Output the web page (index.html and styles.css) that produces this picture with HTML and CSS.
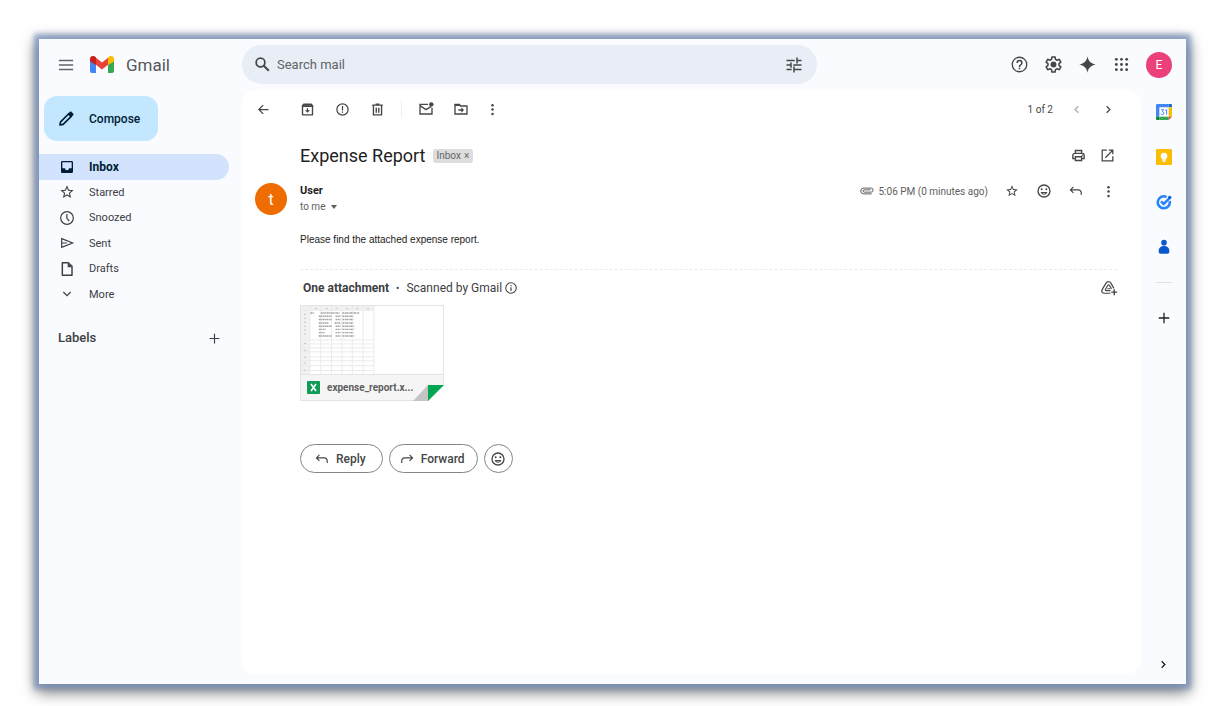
FILE: index.html
```html
<!DOCTYPE html>
<html lang="en">
<head>
<meta charset="utf-8">
<title>Expense Report - Gmail</title>
<link rel="stylesheet" href="styles.css">
</head>
<body>
<svg class="defs" aria-hidden="true">
  <symbol id="star" viewBox="0 0 24 24"><path d="M22 9.24l-7.19-.62L12 2 9.19 8.63 2 9.24l5.46 4.73L5.82 21 12 17.27 18.18 21l-1.63-7.03L22 9.24zM12 15.4l-3.76 2.27 1-4.28-3.32-2.88 4.38-.38L12 6.1l1.71 4.04 4.38.38-3.32 2.88 1 4.28L12 15.4z"/></symbol>
  <symbol id="dots" viewBox="0 0 24 24"><circle cx="12" cy="5" r="2"/><circle cx="12" cy="12" r="2"/><circle cx="12" cy="19" r="2"/></symbol>
  <symbol id="smile" viewBox="0 0 24 24"><path d="M12 2a10 10 0 1 0 0 20 10 10 0 0 0 0-20zm0 18a8 8 0 1 1 0-16 8 8 0 0 1 0 16z"/><circle cx="8.5" cy="9.5" r="1.5"/><circle cx="15.5" cy="9.5" r="1.5"/><path d="M6.900 13.500h10.200c-.8 2.300-2.700 4-5.100 4s-4.300-1.700-5.100-4zm2.600 1.500c.6.7 1.500 1 2.500 1s1.900-.3 2.500-1z"/></symbol>
  <symbol id="reply" viewBox="0 0 24 24"><path d="M7.600 5L2.500 10.100l5.100 5.100M3 10.100h13a5 5 0 0 1 5 5V19" fill="none" stroke="currentColor" stroke-width="2"/></symbol>
  <symbol id="chevron" viewBox="0 0 24 24"><path d="M8.600 6l6 6-6 6" fill="none" stroke="currentColor" stroke-width="2.400"/></symbol>
  <symbol id="plus" viewBox="0 0 24 24"><path d="M12 3v18M3 12h18" fill="none" stroke="currentColor" stroke-width="2.200"/></symbol>
</svg>
<div class="window">
  <header class="header">
    <div class="brand">
      <button class="icon-btn" aria-label="Main menu"><svg class="i18" viewBox="0 0 24 24"><path d="M2.500 6h19M2.500 12h19M2.500 18h19" fill="none" stroke="currentColor" stroke-width="2"/></svg></button>
      <a class="logo" href="#">
        <svg class="logo-mark" viewBox="0 0 24 17"><path fill="#4285f4" d="M0 4l6 4v9H2a2 2 0 0 1-2-2z"/><path fill="#34a853" d="M24 4l-6 4v9h4a2 2 0 0 0 2-2z"/><path fill="#ea4335" d="M5 1l7 5.500L19 1v7l-7 5.500L5 8z"/><path fill="#fbbc04" d="M18 1.500c3-2.600 6-1.400 6 1.500v2.500L18 9z"/><path fill="#c5221f" d="M6 1.500C3-1.100 0 .1 0 3v2.500L6 9z"/></svg>
        <span>Gmail</span>
      </a>
    </div>
    <form class="search">
      <button class="icon-btn" type="button" aria-label="Search"><svg class="i19" viewBox="0 0 24 24"><circle cx="9.500" cy="9.500" r="5.500" fill="none" stroke="currentColor" stroke-width="2.200"/><path d="M13.600 13.600l6.400 6.400" stroke="currentColor" stroke-width="2.600"/></svg></button>
      <input type="text" placeholder="Search mail" aria-label="Search mail">
      <button class="icon-btn" type="button" aria-label="Search options"><svg class="i18" viewBox="0 0 24 24"><path d="M2 6h11M17 6h5M16 2v8M2 12h5M11 12h11M8 8.500v7M2 18h7M13 18h9M12 14v8" fill="none" stroke="currentColor" stroke-width="2"/></svg></button>
    </form>
    <nav class="tools" aria-label="Account tools">
      <button class="icon-btn" aria-label="Support"><svg class="i19" viewBox="0 0 24 24"><path d="M11 18h2v-2h-2v2zm1-16a10 10 0 1 0 0 20 10 10 0 0 0 0-20zm0 18.300a8.300 8.300 0 1 1 0-16.600 8.300 8.300 0 0 1 0 16.600zm0-14.300a4 4 0 0 0-4 4h2a2 2 0 1 1 4 0c0 2-3 1.750-3 5h2c0-2.250 3-2.500 3-5a4 4 0 0 0-4-4z"/></svg></button>
      <button class="icon-btn" aria-label="Settings"><svg class="i19" viewBox="0 0 24 24"><path d="M10 2.500h4l.5 3 2 1.100 2.800-1.100 2 3.500-2.300 1.900v2.200l2.300 1.900-2 3.500-2.800-1.100-2 1.100-.5 3h-4l-.5-3-2-1.100-2.800 1.100-2-3.500L5 13.100v-2.200L2.700 9l2-3.500 2.800 1.100 2-1.100z" fill="none" stroke="currentColor" stroke-width="2" stroke-linejoin="round"/><circle cx="12" cy="12" r="3.700"/></svg></button>
      <button class="icon-btn" aria-label="Gemini"><svg class="i19" viewBox="0 0 24 24"><path d="M12 1.500C13 7.500 16.500 11 22.500 12 16.500 13 13 16.500 12 22.500 11 16.500 7.500 13 1.500 12 7.500 11 11 7.500 12 1.500z"/></svg></button>
      <button class="icon-btn" aria-label="Google apps"><svg class="i19" viewBox="0 0 24 24"><circle cx="5.500" cy="5.500" r="1.800"/><circle cx="12" cy="5.500" r="1.800"/><circle cx="18.500" cy="5.500" r="1.800"/><circle cx="5.500" cy="12" r="1.800"/><circle cx="12" cy="12" r="1.800"/><circle cx="18.500" cy="12" r="1.800"/><circle cx="5.500" cy="18.500" r="1.800"/><circle cx="12" cy="18.500" r="1.800"/><circle cx="18.500" cy="18.500" r="1.800"/></svg></button>
      <button class="account" aria-label="Google Account">E</button>
    </nav>
  </header>

  <aside class="sidebar">
    <button class="compose"><svg class="i18" viewBox="0 0 24 24"><path d="M4 20l.8-4.200L15.600 5l3.400 3.400L8.200 19.200z" fill="none" stroke="currentColor" stroke-width="2.200" stroke-linejoin="round"/><path d="M14 5.500l3-3c.8-.8 1.800-.8 2.500 0l2 2c.8.800.8 1.800 0 2.500l-3 3z"/></svg>Compose</button>
    <nav class="folders" aria-label="Folders">
      <a class="active" href="#"><svg class="i16" viewBox="0 0 24 24"><path d="M19 3H5a2 2 0 0 0-2 2v14c0 1.100.9 2 2 2h14a2 2 0 0 0 2-2V5a2 2 0 0 0-2-2zm0 11h-4a3 3 0 0 1-6 0H5V5h14z"/></svg>Inbox</a>
      <a href="#"><svg class="i16"><use href="#star"/></svg>Starred</a>
      <a href="#"><svg class="i16" viewBox="0 0 24 24"><circle cx="12" cy="12" r="9.500" fill="none" stroke="currentColor" stroke-width="1.800"/><path d="M11.800 6v6.500l3.500 4" fill="none" stroke="currentColor" stroke-width="1.800"/></svg>Snoozed</a>
      <a href="#"><svg class="i16" viewBox="0 0 24 24"><path d="M4 5.500l16.500 6.500L4 18.500zM4 12h8" fill="none" stroke="currentColor" stroke-width="1.800"/></svg>Sent</a>
      <a href="#"><svg class="i16" viewBox="0 0 24 24"><path d="M5 2.500h9l5.500 5.500v13.500H5z" fill="none" stroke="currentColor" stroke-width="2.200" stroke-linejoin="round"/><path d="M13 3l6.500 6.500H13z"/></svg>Drafts</a>
      <a href="#"><svg class="i16" viewBox="0 0 24 24"><path d="M6.500 9l5.500 5.500L17.500 9" fill="none" stroke="currentColor" stroke-width="1.800"/></svg>More</a>
    </nav>
    <div class="labels"><h2>Labels</h2><button class="icon-btn" aria-label="Create new label"><svg class="i13"><use href="#plus"/></svg></button></div>
  </aside>

  <main class="mail">
    <div class="toolbar">
      <button class="tool back" aria-label="Back to Inbox"><svg class="i15" viewBox="0 0 24 24"><path d="M20 12H5M11.500 5L4.500 12l7 7" fill="none" stroke="currentColor" stroke-width="2"/></svg></button>
      <button class="tool" aria-label="Archive"><svg class="i15" viewBox="0 0 24 24"><path d="M4 6.500h16V20.500H4zM4 6l2-2.500h12L20 6" fill="none" stroke="currentColor" stroke-width="2.200" stroke-linejoin="round"/><path d="M3 5h18v3H3zM11 10h2v3h3l-4 4-4-4h3z"/></svg></button>
      <button class="tool" aria-label="Report spam"><svg class="i15" viewBox="0 0 24 24"><circle cx="12" cy="12" r="9" fill="none" stroke="currentColor" stroke-width="2"/><path d="M11 6.500h2v7h-2zM11 15h2v2h-2z"/></svg></button>
      <button class="tool" aria-label="Delete"><svg class="i15" viewBox="0 0 24 24"><path d="M3.500 5h17M9 3.500h6M5.500 5v15.500h13V5M10 9v8M14 9v8" fill="none" stroke="currentColor" stroke-width="2.200"/></svg></button>
      <span class="divider"></span>
      <button class="tool" aria-label="Mark as unread"><svg class="i16" viewBox="0 0 24 24"><path d="M15 5H3v14.500h18V10M3 7l9 6 8-5" fill="none" stroke="currentColor" stroke-width="2"/><circle cx="20" cy="5" r="3.300"/></svg></button>
      <button class="tool" aria-label="Move to"><svg class="i16" viewBox="0 0 24 24"><path d="M3 19.500V5h6.500l2 2.500H21v12z" fill="none" stroke="currentColor" stroke-width="2"/><path d="M2.500 4.500h7l2 3h-9zM12.500 9.500l4 4-4 4v-3H8v-2h4.500z"/></svg></button>
      <button class="tool narrow" aria-label="More"><svg class="i15"><use href="#dots"/></svg></button>
      <span class="count">1 of 2</span>
      <button class="action faded" aria-label="Newer"><svg class="i13 flip"><use href="#chevron"/></svg></button>
      <button class="action" aria-label="Older"><svg class="i13"><use href="#chevron"/></svg></button>
    </div>

    <div class="subject">
      <h1>Expense Report</h1>
      <button class="chip">Inbox <span>×</span></button>
      <div class="subject-actions">
        <button class="action" aria-label="Print all"><svg class="i15" viewBox="0 0 24 24"><path d="M7 8V4h10v4M6.500 17H3v-5.500a3 3 0 0 1 3-3h12a3 3 0 0 1 3 3V17h-3.500M7 14h10v6H7z" fill="none" stroke="currentColor" stroke-width="2.200"/><circle cx="18" cy="11.500" r="1.200"/></svg></button>
        <button class="action" aria-label="In new window"><svg class="i15" viewBox="0 0 24 24"><path d="M11 3.500H3.500v17h17V13M14 3.500h6.500V10M20 4L8.500 15.500" fill="none" stroke="currentColor" stroke-width="2"/></svg></button>
      </div>
    </div>

    <article class="message">
      <div class="sender-avatar">t</div>
      <div class="message-body">
        <div class="meta">
          <div class="sender">
            <strong>User</strong>
            <button class="to">to me <svg class="caret" viewBox="0 0 6 4"><path d="M0 0h6L3 4z"/></svg></button>
          </div>
          <div class="meta-right">
            <svg class="clip" viewBox="0 0 26 16"><path d="M22 13H8a5 5 0 0 1 0-10h13a3.500 3.500 0 0 1 0 7H9a2 2 0 0 1 0-4h11" fill="none" stroke="currentColor" stroke-width="1.700"/></svg>
            <span class="time">5:06 PM (0 minutes ago)</span>
            <button class="action" aria-label="Star"><svg class="i14"><use href="#star"/></svg></button>
            <button class="action" aria-label="Add reaction"><svg class="i16"><use href="#smile"/></svg></button>
            <button class="action" aria-label="Reply"><svg class="i14"><use href="#reply"/></svg></button>
            <button class="action" aria-label="More"><svg class="i15"><use href="#dots"/></svg></button>
          </div>
        </div>
        <p class="text">Please find the attached expense report.</p>
        <section class="attachments">
          <div class="attach-head">
            <strong>One attachment</strong><span class="bullet">•</span><span>Scanned by Gmail</span>
            <svg class="i14 info" viewBox="0 0 24 24"><circle cx="12" cy="12" r="9" fill="none" stroke="currentColor" stroke-width="1.800"/><path d="M11 10.500h2v6.500h-2zM11 7h2v2h-2z"/></svg>
            <button class="action drive" aria-label="Add to Drive"><svg class="i18" viewBox="0 0 24 24"><path d="M14 19H6c-3 0-4.500-2.500-3.200-4.800L8 5.500c1.500-2.600 5-2.600 6.500 0l4 7M14 15.500H8.500c-1.200 0-1.700-1-1.200-1.900l3-5c.6-1 1.700-1 2.300 0l2.800 4.600M10 13h3.500" fill="none" stroke="currentColor" stroke-width="1.600"/><path d="M19 13.500v8M15 17.500h8" fill="none" stroke="currentColor" stroke-width="1.900"/></svg></button>
          </div>
          <a class="card" href="#">
            <svg class="sheet" viewBox="0 0 144 69" preserveAspectRatio="xMinYMin slice">
              <path d="M0 0h74v4H0zM0 4h9v65H0z" fill="#f1f1f1"/>
              <path d="M9 0v69M20 0v69M31 0v69M41.500 0v69M52 0v69M63 0v69M74 0v69M0 4.500h74M0 34.500h74M0 38.500h74M0 42.500h74M0 46.500h74M0 51.500h74M0 55.500h74M0 60.500h74M0 65.500h74" fill="none" stroke="#ebebeb" stroke-width="1"/>
              <path d="M3 8.500h2M3 12.500h2M3 16.500h2M3 20.500h2M3 24.500h2M3 28.500h2M3 38h2M3 45h2M3 52h2M3 58h2M3 65h2M14 2.500h2M25 2.500h2M35 2.500h2M46 2.500h2M56 2.500h2M67 2.500h2" stroke="#c4c4c4" stroke-width="1"/>
              <g fill="none" stroke="#a4a4a4" stroke-width="1.500" stroke-dasharray="2 .5 1 .4">
                <path d="M9.500 7h4M20 7h19M42 7h17"/>
                <path d="M18 10.500h13M35 10.500h5M42 10.500h11M18 13.700h13M35 13.700h5M42 13.700h11M18 17.200h10M34 17.200h6M42 17.200h11M18 20.500h13M35 20.500h5M42 20.500h12M18 23.700h7M35 23.700h5M42 23.700h12M18 27h6M35 27h5M42 27h11M18 30.500h13M35 30.500h5M42 30.500h12"/>
              </g>
            </svg>
            <span class="file"><svg class="xls" viewBox="0 0 13 13"><rect width="13" height="13" rx="1" fill="#0f9d58"/><path d="M4 3l5 7M9 3l-5 7" stroke="#fff" stroke-width="1.600"/></svg>expense_report.x...</span>
            <svg class="fold" viewBox="0 0 31 16"><path d="M0 16L15 0v16z" fill="#c4c4c4"/><path d="M31 0v16H15z" fill="#fff"/><path d="M15 0h16L15 16z" fill="#00a651"/></svg>
          </a>
        </section>
        <div class="respond">
          <button class="pill"><svg class="i14"><use href="#reply"/></svg>Reply</button>
          <button class="pill"><svg class="i14 flip"><use href="#reply"/></svg>Forward</button>
          <button class="pill round" aria-label="Add reaction"><svg class="i16"><use href="#smile"/></svg></button>
        </div>
      </div>
    </article>
  </main>

  <aside class="rail" aria-label="Side panel">
    <button aria-label="Calendar"><svg class="i16" viewBox="0 0 24 24"><path fill="#fff" d="M5 5h14v14H5z"/><path fill="#4285f4" d="M0 2a2 2 0 0 1 2-2h17v5H5v14H0z"/><path fill="#1967d2" d="M19 0h3a2 2 0 0 1 2 2v3h-5z"/><path fill="#fbbc04" d="M19 5h5v14h-5z"/><path fill="#34a853" d="M5 19h14v5H5z"/><path fill="#188038" d="M0 19h5v5H2a2 2 0 0 1-2-2z"/><path fill="#ea4335" d="M19 19h5l-5 5z"/><path d="M7.500 8.500h4L9.500 11.500c3 0 3 4.500 0 4.500-1.300 0-2-.6-2.300-1.500M14 9.700l2-1.200V16" fill="none" stroke="#4285f4" stroke-width="1.500"/></svg></button>
    <button aria-label="Keep"><svg class="i16" viewBox="0 0 24 24"><rect width="24" height="24" rx="2" fill="#fbbc04"/><circle cx="12" cy="10.500" r="5" fill="#fff"/><path d="M9 13h6v3H9zM9.500 17h5v2h-5z" fill="#fff"/></svg></button>
    <button aria-label="Tasks"><svg class="i16" viewBox="0 0 24 24"><path d="M16 4.500A9 9 0 1 0 20.500 10.500" fill="none" stroke="#2684fc" stroke-width="3.800"/><path d="M7.500 11l4 4L21.500 5" fill="none" stroke="#2684fc" stroke-width="3.800"/><circle cx="20.500" cy="5" r="2.500" fill="#0066da"/></svg></button>
    <button aria-label="Contacts"><svg class="i16" viewBox="0 0 24 24"><circle cx="12" cy="5.500" r="4.200" fill="#0b57d0"/><path d="M4 17.500c0-4 3.500-7 8-7s8 3 8 7V19a3 3 0 0 1-3 3H7a3 3 0 0 1-3-3z" fill="#0b57d0"/></svg></button>
    <hr>
    <button class="add" aria-label="Get add-ons"><svg class="i14"><use href="#plus"/></svg></button>
    <button class="hide" aria-label="Hide side panel"><svg class="i13"><use href="#chevron"/></svg></button>
  </aside>
</div>
</body>
</html>
```
FILE: styles.css
```css
* { box-sizing: border-box; }
body {
  margin: 0;
  min-height: 100vh;
  padding: 39px 34px 22px 39px;
  display: flex;
  background: #fff;
  color: #3c4043;
  font-family: Roboto, "Liberation Sans", sans-serif;
  font-size: 12px;
}
.defs { display: none; }
svg { display: block; fill: currentColor; flex: none; }
button, input {
  font: inherit; color: inherit; border: 0; padding: 0; background: none;
}
button {
  display: flex; align-items: center; justify-content: center; flex: none;
}
a { color: inherit; text-decoration: none; }
h1, h2, p { margin: 0; font-weight: 400; }

.i13 { width: 13px; height: 13px; }
.i14 { width: 14px; height: 14px; }
.i15 { width: 15px; height: 15px; }
.i16 { width: 16px; height: 16px; }
.i18 { width: 18px; height: 18px; }
.i19 { width: 19px; height: 19px; }
.flip { transform: scaleX(-1); }

.window {
  flex: 1;
  display: grid;
  grid-template-columns: 203px 1fr 45px;
  grid-template-rows: 51px 1fr;
  background: #f9fbff;
  box-shadow: 0 0 5px 5px rgba(120, 144, 188, .75), 0 5px 14px 3px rgba(0, 0, 0, .55);
}

/* Header */
.header {
  grid-column: 1 / -1;
  display: flex;
  align-items: center;
  padding-right: 14px;
}
.brand {
  width: 203px; flex: none;
  display: flex; align-items: center; gap: 15px;
  padding-left: 18px;
  color: #5f6368;
}
.logo { display: flex; align-items: center; gap: 12px; font-size: 17px; line-height: 24px; color: #55585b; }
.logo-mark { width: 24px; height: 17px; }
.search {
  flex: 0 1 575px; height: 39px;
  display: flex; align-items: center; gap: 5px;
  padding: 0 14px 0 11px;
  border-radius: 20px;
  background: #e9eef6;
  color: #444746;
}
.search input { flex: 1; min-width: 0; outline: 0; font-size: 13px; }
.search input::placeholder { color: #5f6368; opacity: 1; }
.tools { margin-left: auto; display: flex; align-items: center; gap: 15px; color: #444746; }
.account {
  width: 26px; height: 26px; border-radius: 50%;
  background: #ec407a; color: #fff;
}

/* Sidebar */
.sidebar { padding-top: 6px; }
.compose {
  height: 45px; margin-left: 5px; padding: 0 18px 0 13px; gap: 14px;
  border-radius: 13px; background: #c2e7ff; color: #001d35; font-weight: 500;
}
.folders {
  margin: 13px 13px 0 0; height: 153px;
  display: grid; grid-template-rows: repeat(6, 1fr);
  font-size: 11px;
}
.folders a {
  display: flex; align-items: center; gap: 14px;
  padding-left: 20px;
  border-radius: 0 13px 13px 0;
}
.folders .active { background: #d3e3fd; color: #001d35; font-size: 12px; font-weight: 700; }
.labels {
  display: flex; justify-content: space-between; align-items: center;
  padding: 22px 21px 0 19px;
}
.labels h2 { font-size: 13px; line-height: 18px; font-weight: 500; }

/* Open conversation */
.mail { background: #fff; border-radius: 14px; margin-bottom: 10px; }
.toolbar { display: flex; align-items: center; height: 38px; padding: 0 17px 0 4px; color: #444746; }
.tool { width: 35px; height: 32px; }
.back { margin-right: 9px; }
.narrow { width: 28px; }
.divider { width: 1px; height: 16px; margin: 0 6px; background: #e9eef2; }
.count { margin-left: auto; margin-right: 7px; font-size: 10px; }
.action { width: 32px; height: 24px; color: #444746; }
.faded { color: #aaacae; }
.subject { display: flex; align-items: center; gap: 7px; height: 55px; padding: 0 19px 0 58px; }
.subject h1 { font-size: 18px; line-height: 24px; color: #1f1f1f; }
.chip {
  height: 14px; padding: 0 4px; gap: 3px;
  border-radius: 3px; background: #ddd; color: #666;
  font-size: 10px; line-height: 14px;
}
.subject-actions { margin-left: auto; display: flex; }
.subject-actions .action { width: 29px; }

.message { display: flex; gap: 13px; padding: 0 17px 0 13px; }
.sender-avatar {
  width: 32px; height: 32px; flex: none;
  display: grid; place-items: center;
  border-radius: 50%; background: #ef6c00; color: #fff; font-size: 16px;
}
.message-body { flex: 1; min-width: 0; }
.meta { display: flex; justify-content: space-between; align-items: flex-start; }
.sender { display: flex; flex-direction: column; align-items: flex-start; }
.sender strong { font-size: 11px; line-height: 16px; color: #1f1f1f; }
.to { font-size: 10px; line-height: 16px; gap: 6px; color: #5e5e5e; }
.caret { width: 6px; height: 4px; }
.meta-right { display: flex; align-items: center; margin-top: -4px; color: #5e5e5e; }
.clip { width: 15px; height: 10px; margin-right: 5px; }
.time { margin-right: 8px; font-size: 10px; }
.text { margin-top: 17px; font: 10px/16px "Liberation Sans", sans-serif; color: #222; }
.attachments { margin: 21px 7px 0 0; padding-top: 6px; border-top: 1px dashed #ebebeb; }
.attach-head { display: flex; align-items: center; height: 24px; padding-left: 3px; }
.bullet { margin: 0 7px; font-size: 10px; }
.info { margin-left: 2px; }
.drive { margin-left: auto; margin-right: -8px; }
.card {
  position: relative; display: block; width: 144px; margin-top: 5px;
  border: 1px solid #e3e3e3; background: #fff;
}
.sheet { width: 100%; height: 68px; }
.file {
  display: flex; align-items: center; gap: 7px; height: 26px; padding-left: 6px;
  border-top: 1px solid #e3e3e3; background: #f5f5f5; color: #5e5e5e;
  font-size: 10px; font-weight: 700;
}
.xls { width: 13px; height: 13px; }
.fold { position: absolute; right: -1px; bottom: -1px; width: 31px; height: 16px; }
.respond { display: flex; gap: 6px; margin-top: 43px; }
.pill {
  height: 29px; padding: 0 16px 0 14px; gap: 7px;
  border: 1px solid #80868b; border-radius: 15px; background: #fff; color: #444746; font-weight: 500;
}
.pill:nth-child(2) { padding: 0 12px 0 10px; }
.pill.round { width: 29px; padding: 0; }

/* Side panel */
.rail { display: flex; flex-direction: column; align-items: center; padding: 6px 0 12px; }
.rail button { width: 32px; height: 32px; margin-bottom: 13px; }
.rail hr { width: 16px; height: 1px; margin: 6px 0 19px; border: 0; background: #dfe1e5; }
.rail .add { color: #1f1f1f; }
.rail .hide { margin-top: auto; margin-bottom: 0; height: 16px; color: #1f1f1f; }
```
